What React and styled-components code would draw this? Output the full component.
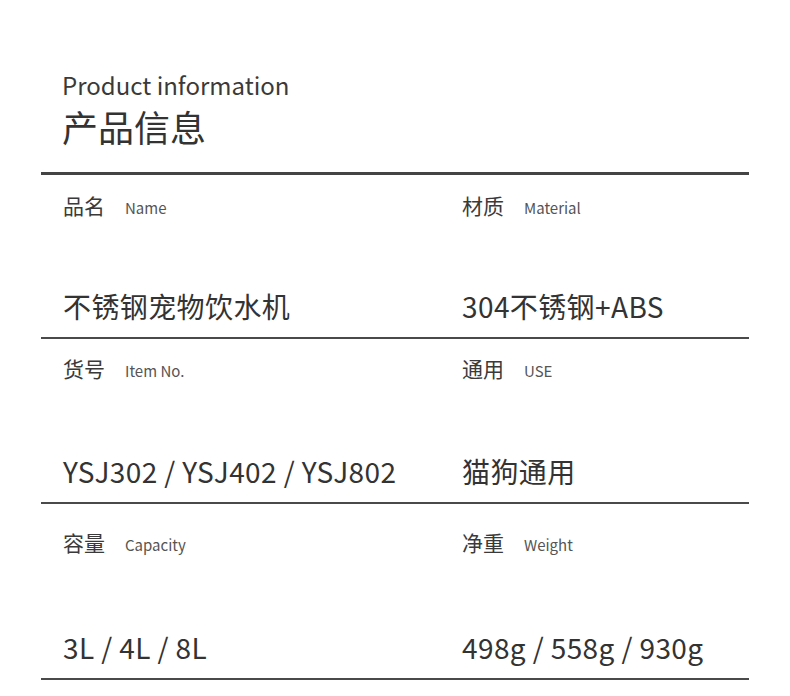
import React from "react";
import styled, { createGlobalStyle } from "styled-components";

const Global = createGlobalStyle`
  html, body { margin: 0; padding: 0; background: #fff; }
  body { font-family: "Noto Sans CJK SC", "Noto Sans", sans-serif; color: #333; }
`;

const Page = styled.div`
  width: 790px;
  height: 696px;
  padding: 68px 0 0 41px;
  box-sizing: border-box;
  overflow: hidden;
`;

const Header = styled.header`
  padding-left: 21px;
  padding-bottom: 22px;
`;

const EnTitle = styled.div`
  font-size: 24px;
  line-height: 34px;
  color: #3a3a3a;
`;

const CnTitle = styled.h1`
  margin: 0;
  font-size: 36px;
  font-weight: 400;
  line-height: 48px;
  color: #333;
`;

const Table = styled.div`
  width: 708px;
  border-top: 3px solid #444;
`;

const Row = styled.div`
  display: grid;
  grid-template-columns: 399px 309px;
  height: ${(p) => p.$h}px;
  border-bottom: 2px solid #4a4a4a;
`;

const Cell = styled.div`
  display: flex;
  flex-direction: column;
  justify-content: space-between;
  padding: ${(p) => p.$top}px 0 11px 22px;
`;

const Label = styled.div`
  display: flex;
  align-items: baseline;
  gap: 20px;
  line-height: 28px;
`;

const LabelCn = styled.span`
  font-size: 21px;
  color: #3a3a3a;
`;

const LabelEn = styled.span`
  font-size: 15px;
  color: #555;
`;

const Value = styled.div`
  font-size: 28px;
  line-height: 40px;
  letter-spacing: 0.4px;
  color: #333;
`;

const rows = [
  {
    h: 162,
    top: 16,
    cells: [
      { cn: "品名", en: "Name", v: "不锈钢宠物饮水机" },
      { cn: "材质", en: "Material", v: "304不锈钢+ABS" },
    ],
  },
  {
    h: 163,
    top: 15,
    cells: [
      { cn: "货号", en: "Item No.", v: "YSJ302 / YSJ402 / YSJ802" },
      { cn: "通用", en: "USE", v: "猫狗通用" },
    ],
  },
  {
    h: 174,
    top: 24,
    cells: [
      { cn: "容量", en: "Capacity", v: "3L / 4L / 8L" },
      { cn: "净重", en: "Weight", v: "498g / 558g / 930g" },
    ],
  },
];

export default function App() {
  return (
    <Page>
      <Global />
      <Header>
        <EnTitle>Product information</EnTitle>
        <CnTitle>产品信息</CnTitle>
      </Header>
      <Table>
        {rows.map((r, i) => (
          <Row key={i} $h={r.h}>
            {r.cells.map((c) => (
              <Cell key={c.cn} $top={r.top}>
                <Label>
                  <LabelCn>{c.cn}</LabelCn>
                  <LabelEn>{c.en}</LabelEn>
                </Label>
                <Value>{c.v}</Value>
              </Cell>
            ))}
          </Row>
        ))}
      </Table>
    </Page>
  );
}
